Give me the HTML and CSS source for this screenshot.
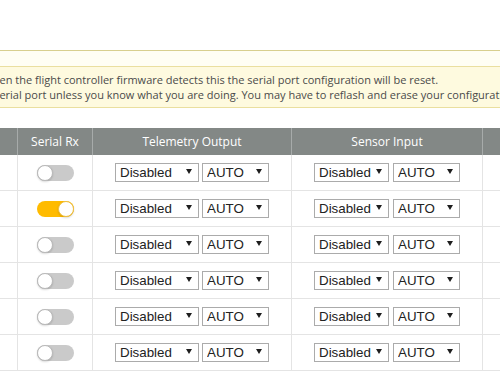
FILE: index.html
```html
<!DOCTYPE html>
<html lang="en">
<head>
<meta charset="utf-8">
<title>Ports</title>
<link rel="stylesheet" href="styles.css">
</head>
<body>
<div class="tab-ports">
  <div class="strip"></div>
  <div class="note">
    <p><strong>Note:</strong> not all combinations are valid. When the flight controller firmware detects this the serial port configuration will be reset.<br><strong>Note:</strong> Do <strong>NOT</strong> disable MSP on the first serial port unless you know what you are doing. You may have to reflash and erase your configuration if you do.</p>
  </div>
  <div class="ports">
    <div class="row head">
      <div class="cell">Identifier</div>
      <div class="cell">Configuration/MSP</div>
      <div class="cell">Serial Rx</div>
      <div class="cell">Telemetry Output</div>
      <div class="cell">Sensor Input</div>
      <div class="cell">Peripherals</div>
    </div>

    <div class="row">
      <div class="cell">UART1</div>
      <div class="cell"><span class="switch on"></span></div>
      <div class="cell"><span class="switch"></span></div>
      <div class="cell"><span class="pair tele-pair"><span class="select tele"><select><option>Disabled</option></select></span><span class="select baud"><select><option>AUTO</option></select></span></span></div>
      <div class="cell"><span class="pair"><span class="select sens"><select><option>Disabled</option></select></span><span class="select baud"><select><option>AUTO</option></select></span></span></div>
      <div class="cell"><span class="pair"><span class="select sens"><select><option>Disabled</option></select></span><span class="select baud"><select><option>AUTO</option></select></span></span></div>
    </div>

    <div class="row">
      <div class="cell">UART2</div>
      <div class="cell"><span class="switch"></span></div>
      <div class="cell"><span class="switch on"></span></div>
      <div class="cell"><span class="pair tele-pair"><span class="select tele"><select><option>Disabled</option></select></span><span class="select baud"><select><option>AUTO</option></select></span></span></div>
      <div class="cell"><span class="pair"><span class="select sens"><select><option>Disabled</option></select></span><span class="select baud"><select><option>AUTO</option></select></span></span></div>
      <div class="cell"><span class="pair"><span class="select sens"><select><option>Disabled</option></select></span><span class="select baud"><select><option>AUTO</option></select></span></span></div>
    </div>

    <div class="row">
      <div class="cell">UART3</div>
      <div class="cell"><span class="switch"></span></div>
      <div class="cell"><span class="switch"></span></div>
      <div class="cell"><span class="pair tele-pair"><span class="select tele"><select><option>Disabled</option></select></span><span class="select baud"><select><option>AUTO</option></select></span></span></div>
      <div class="cell"><span class="pair"><span class="select sens"><select><option>Disabled</option></select></span><span class="select baud"><select><option>AUTO</option></select></span></span></div>
      <div class="cell"><span class="pair"><span class="select sens"><select><option>Disabled</option></select></span><span class="select baud"><select><option>AUTO</option></select></span></span></div>
    </div>

    <div class="row">
      <div class="cell">UART4</div>
      <div class="cell"><span class="switch"></span></div>
      <div class="cell"><span class="switch"></span></div>
      <div class="cell"><span class="pair tele-pair"><span class="select tele"><select><option>Disabled</option></select></span><span class="select baud"><select><option>AUTO</option></select></span></span></div>
      <div class="cell"><span class="pair"><span class="select sens"><select><option>Disabled</option></select></span><span class="select baud"><select><option>AUTO</option></select></span></span></div>
      <div class="cell"><span class="pair"><span class="select sens"><select><option>Disabled</option></select></span><span class="select baud"><select><option>AUTO</option></select></span></span></div>
    </div>

    <div class="row">
      <div class="cell">UART5</div>
      <div class="cell"><span class="switch"></span></div>
      <div class="cell"><span class="switch"></span></div>
      <div class="cell"><span class="pair tele-pair"><span class="select tele"><select><option>Disabled</option></select></span><span class="select baud"><select><option>AUTO</option></select></span></span></div>
      <div class="cell"><span class="pair"><span class="select sens"><select><option>Disabled</option></select></span><span class="select baud"><select><option>AUTO</option></select></span></span></div>
      <div class="cell"><span class="pair"><span class="select sens"><select><option>Disabled</option></select></span><span class="select baud"><select><option>AUTO</option></select></span></span></div>
    </div>

    <div class="row">
      <div class="cell">UART6</div>
      <div class="cell"><span class="switch"></span></div>
      <div class="cell"><span class="switch"></span></div>
      <div class="cell"><span class="pair tele-pair"><span class="select tele"><select><option>Disabled</option></select></span><span class="select baud"><select><option>AUTO</option></select></span></span></div>
      <div class="cell"><span class="pair"><span class="select sens"><select><option>Disabled</option></select></span><span class="select baud"><select><option>AUTO</option></select></span></span></div>
      <div class="cell"><span class="pair"><span class="select sens"><select><option>Disabled</option></select></span><span class="select baud"><select><option>AUTO</option></select></span></span></div>
    </div>
  </div>
</div>
</body>
</html>
```

FILE: styles.css
```css
html, body {
  margin: 0;
  padding: 0;
  overflow: hidden;
  background: #fff;
}

body {
  width: 500px;
  height: 388px;
  font-family: "Open Sans", "Liberation Sans", sans-serif;
  color: #444;
}

.tab-ports {
  width: 884px;
  margin-left: -210px;
  padding-top: 50px;
}

.strip {
  height: 15px;
  border-top: 1px solid #d8cf8e;
  background: #fffef3;
}

.note {
  border: 1px solid #eadf9f;
  background: #fefadf;
  padding: 5px 2px;
}

.note p {
  margin: 0;
  font-size: 11px;
  line-height: 15px;
  white-space: nowrap;
  color: #4a4a4a;
}

.note strong {
  font-weight: 700;
}

.ports {
  margin-top: 20px;
}

.row {
  display: grid;
  grid-template-columns: 80px 148px 75px 199px 191px 191px;
  height: 36px;
}

.cell {
  box-sizing: border-box;
  border-right: 1px solid #e4e4e4;
  border-bottom: 1px solid #e4e4e4;
  display: flex;
  align-items: center;
  justify-content: center;
  font-size: 12px;
}

.head {
  height: 27px;
  background: #838886;
}

.head .cell {
  color: #fff;
  border-bottom: 0;
  border-right-color: #a7abaa;
}

.switch {
  display: flex;
  width: 37px;
  height: 16px;
  border-radius: 8px;
  background: #cacaca;
}

.switch::before {
  content: "";
  width: 16px;
  height: 16px;
  box-sizing: border-box;
  border-radius: 50%;
  background: #fff;
  border: 1px solid #b9b9b9;
  box-shadow: 0 1px 2px rgba(0, 0, 0, 0.15);
}

.switch.on {
  background: #ffbb00;
  justify-content: flex-end;
}

.switch.on::before {
  border-color: #f0c040;
}

.pair {
  display: flex;
  gap: 4px;
}

.pair.tele-pair {
  gap: 3px;
}

.select {
  position: relative;
  display: block;
}

.select.tele { width: 84px; }
.select.sens { width: 75px; }
.select.baud { width: 67px; }

.select select {
  -webkit-appearance: none;
  appearance: none;
  display: block;
  width: 100%;
  height: 19px;
  box-sizing: border-box;
  margin: 0;
  padding: 0 14px 0 4px;
  border: 1px solid #ababab;
  border-radius: 0;
  background: #fff;
  font-family: "Liberation Sans", Arial, sans-serif;
  font-size: 13.333px;
  color: #222;
}

.select::after {
  content: "";
  position: absolute;
  right: 7px;
  top: 6px;
  border-left: 3px solid transparent;
  border-right: 3px solid transparent;
  border-top: 5px solid #1e1e1e;
  pointer-events: none;
}
```
